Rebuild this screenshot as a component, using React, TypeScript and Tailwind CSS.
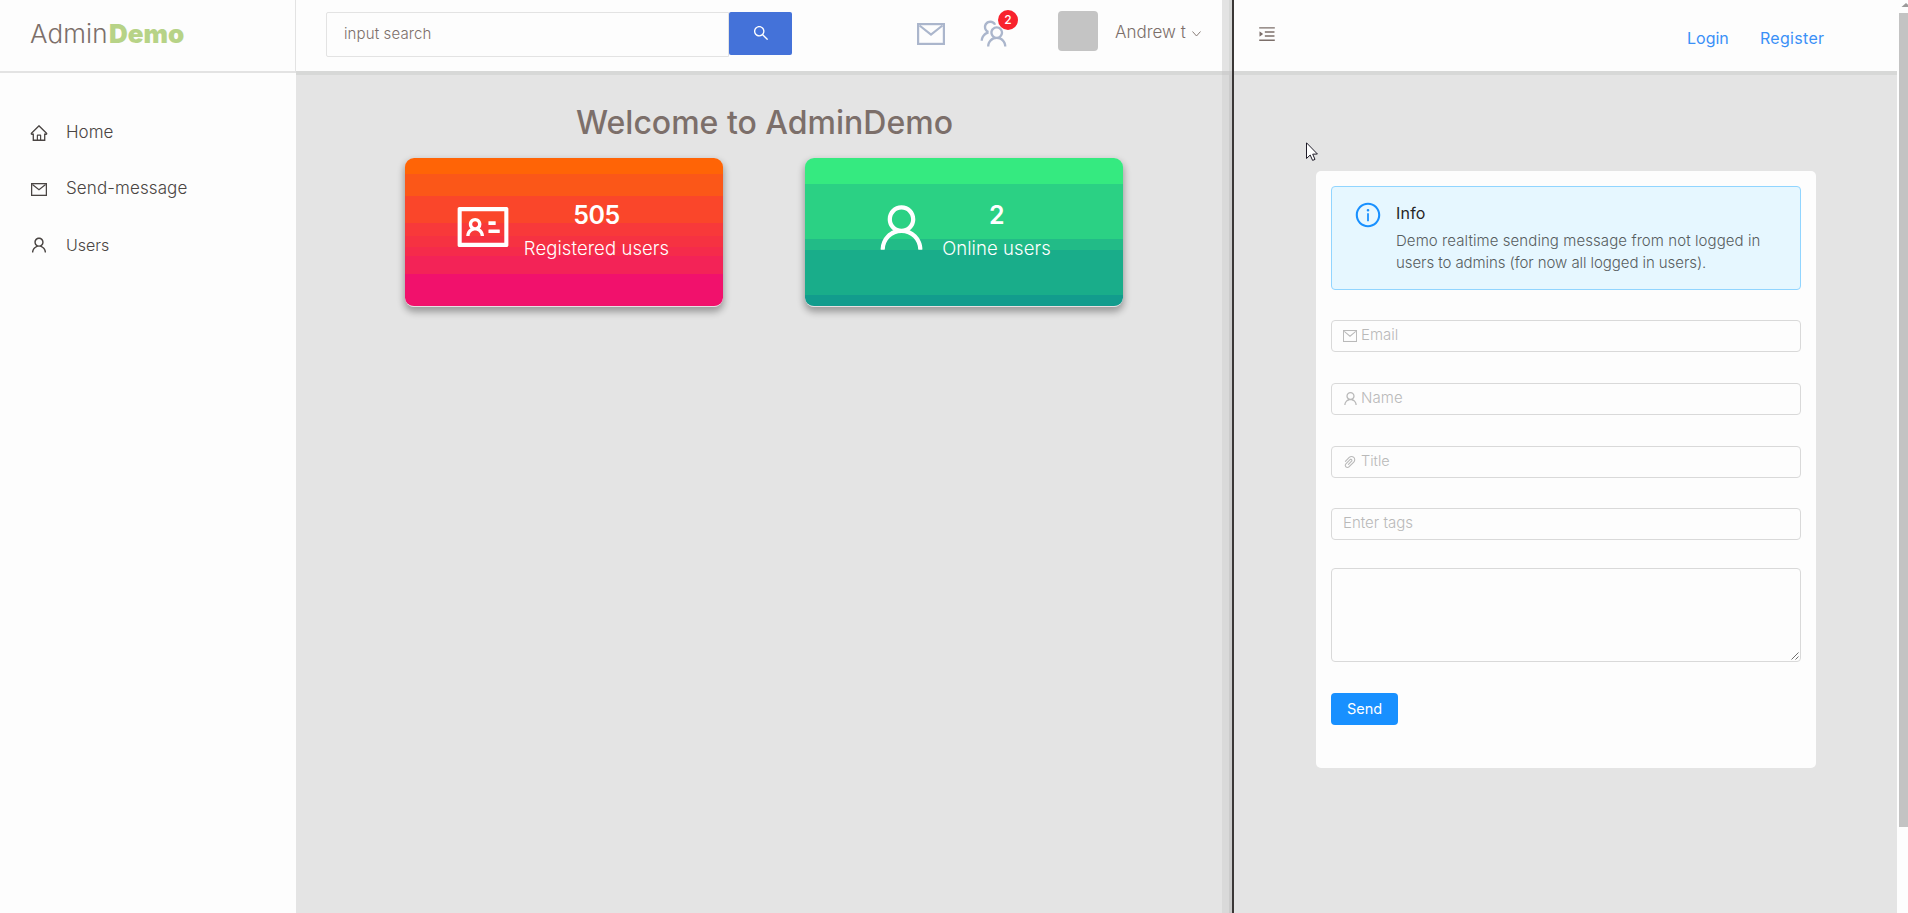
import React from "react";
import {
  AiOutlineHome,
  AiOutlineIdcard,
  AiOutlineInfoCircle,
  AiOutlineMenuUnfold,
  AiOutlinePaperClip,
  AiOutlineSearch,
  AiOutlineTeam,
  AiOutlineUser,
} from "react-icons/ai";

function Envelope({ className = "", stroke = 2 }: { className?: string; stroke?: number }) {
  return (
    <svg viewBox="0 0 28 22" preserveAspectRatio="none" fill="none" stroke="currentColor" strokeWidth={stroke} className={className}>
      <rect x={stroke / 2} y={stroke / 2} width={28 - stroke} height={22 - stroke} />
      <path d="M2.5 2.5 L14 11.5 L25.5 2.5" />
    </svg>
  );
}

function Sidebar() {
  return (
    <aside className="flex h-full w-[296px] shrink-0 flex-col bg-[#fdfdfd]">
      <div className="flex h-[73px] items-center border-r border-b-2 border-[#e3e3e3] pb-[3px] pl-[30px] text-[26px] leading-none">
        <span className="w-[79px] font-light tracking-[0.1px] text-[#7c6f6a]">Admin</span>
        <span className="font-black text-[#b7d387]">Demo</span>
      </div>
      <nav className="flex flex-col pt-[32px] text-[17px] text-[#4a4543]">
        <a className="flex h-14 items-center gap-[19px] pl-[31px]">
          <AiOutlineHome className="h-4 w-4 scale-[1.18]" />
          <span className="font-light">Home</span>
        </a>
        <a className="flex h-14 items-center gap-[19px] pl-[31px]">
          <Envelope className="h-[13px] w-4" stroke={2.2} />
          <span className="font-light tracking-[0.1px]">Send-message</span>
        </a>
        <a className="flex h-14 items-center gap-[19px] pl-[31px]">
          <AiOutlineUser className="h-4 w-4 scale-[1.2]" />
          <span className="text-base font-light">Users</span>
        </a>
      </nav>
    </aside>
  );
}

function StatCard({
  icon,
  value,
  label,
  gradient,
}: {
  icon: React.ReactNode;
  value: string;
  label: string;
  gradient: string;
}) {
  return (
    <div
      className={`flex h-[149px] w-[318px] items-center justify-center gap-[11px] rounded-[9px] border-b border-[#e8dfe2] pr-[6px] text-white shadow-[0_4px_7px_1px_rgba(0,0,0,0.32)] ${gradient}`}
    >
      <span className="mb-[10px] flex h-[60px] w-[60px] items-center justify-center">{icon}</span>
      <div className="flex flex-col items-center whitespace-nowrap">
        <span className="text-[25px] leading-[32px] font-semibold tracking-[-0.5px]">{value}</span>
        <span className="text-[18.5px] leading-[34px] font-light tracking-[0.08px]">{label}</span>
      </div>
    </div>
  );
}

function AdminPane() {
  return (
    <section className="flex h-full w-[926px] shrink-0 flex-col">
      <header className="flex h-[75px] shrink-0 items-start border-b-4 border-[#d7d8d7] bg-[#fdfdfd] text-[#7c6f6a]">
        <div className="mt-[12px] ml-[30px] flex items-start">
          <div className="flex h-[45px] w-[403px] items-center rounded-l-[2px] border border-[#e3e3e3] pb-px pl-[17px] text-[15px] font-light tracking-[0.12px]">
            input search
          </div>
          <button className="flex h-[43px] w-[63px] items-center justify-center rounded-[2px] bg-[#4472d9] pb-px text-white">
            <AiOutlineSearch className="h-[18px] w-[18px]" />
          </button>
        </div>
        <Envelope className="mt-[23px] ml-[125px] h-[22px] w-[28px] text-[#abb6cc]" stroke={2.2} />
        <div className="relative mt-[17px] ml-[32px] h-[34px] w-[34px] text-[#abb6cc]">
          <AiOutlineTeam className="h-[33px] w-[33px]" />
          <span className="absolute -top-[7px] left-[21px] flex h-5 w-5 items-center justify-center rounded-full bg-[#f8222d] text-xs font-medium text-white">
            2
          </span>
        </div>
        <div className="mt-[11px] ml-[47px] h-10 w-10 rounded-[4px] bg-[#c4c4c4]" />
        <span className="mt-[20px] ml-[17px] w-[77px] text-[17px] leading-6 font-light whitespace-nowrap">Andrew t</span>
        <svg viewBox="0 0 9 6" className="mt-[31px] h-[6px] w-[9px]" fill="none" stroke="currentColor" strokeWidth="0.9">
          <path d="M0.5 0.5 L4.5 5 L8.5 0.5" />
        </svg>
      </header>
      <main className="flex flex-col">
        <h1 className="mt-[26px] pl-[11px] text-center text-[32px] leading-[44px] font-medium text-[#7c6f6a]">
          Welcome to AdminDemo
        </h1>
        <div className="mt-[13px] ml-[109px] flex gap-[82px]">
          <StatCard
            icon={<AiOutlineIdcard className="h-[58px] w-[58px] shrink-0" />}
            value="505"
            label="Registered users"
            gradient="bg-[linear-gradient(to_bottom,#ff6406_16px,#fb5718_16px,#fb5718_38px,#fa462a_38px,#fa462a_65px,#f8393a_65px,#f8393a_78px,#f63242_78px,#f63242_89px,#f52b4b_89px,#f52b4b_98px,#f32357_98px,#f32357_116px,#f1116c_116px)]"
          />
          <StatCard
            icon={<AiOutlineUser className="h-[57px] w-[57px] shrink-0" />}
            value="2"
            label="Online users"
            gradient="bg-[linear-gradient(to_bottom,#35ea80_26px,#2bd184_26px,#2bd184_81px,#22bb87_81px,#22bb87_92px,#19ad8a_92px,#19ad8a_137px,#129c8d_137px)]"
          />
        </div>
      </main>
    </section>
  );
}

function Divider() {
  return (
    <div className="flex h-full w-[12px] shrink-0 flex-row">
      <div className="flex w-[7px] flex-col">
        <div className="h-[71px] bg-[#e3e3e3]" />
        <div className="h-[4px] bg-[#cfcfcf]" />
        <div className="grow bg-[#d9d9d9]" />
      </div>
      <div className="flex w-[3px] flex-col">
        <div className="h-[71px] bg-[#d7d8d7]" />
        <div className="grow bg-[#cbcbcb]" />
      </div>
      <div className="w-[2px] bg-[#3a3736]" />
    </div>
  );
}

function Field({ icon, label, text }: { icon?: React.ReactNode; label: string; text: string }) {
  return (
    <div className="flex h-8 items-center rounded-[4px] border border-[#d9d9d9] pb-[2px] pl-[11px] text-[#b9b9b9]">
      {icon && <span className="mr-[4px] flex h-[14px] w-[14px] items-center justify-center pt-px">{icon}</span>}
      <span className={`font-light ${text}`}>{label}</span>
    </div>
  );
}

function GuestPane() {
  return (
    <section className="flex h-full w-[663px] shrink-0 flex-col">
      <header className="flex h-[75px] shrink-0 items-start border-b-4 border-[#d7d8d7] bg-[#fdfdfd]">
        <AiOutlineMenuUnfold className="mt-[24px] ml-[23px] h-5 w-5 text-[#7c6f6a]" />
        <span className="mt-[26px] ml-[410px] w-[73px] text-base leading-6 text-[#3a90f7]">Login</span>
        <span className="mt-[26px] text-base leading-6 tracking-[0.3px] text-[#3a90f7]">Register</span>
      </header>
      <form className="mt-[96px] ml-[82px] flex h-[597px] w-[500px] flex-col rounded-[5px] bg-[#fdfdfd] pt-[15px] pr-[15px] pl-[15px]">
        <div className="flex h-[104px] rounded-[4px] border border-[#91d5ff] bg-[#e6f7ff] pt-[14px] pl-[22px]">
          <AiOutlineInfoCircle className="h-7 w-7 text-[#1890ff]" />
          <div className="ml-[14px] flex flex-col whitespace-nowrap">
            <span className="text-base leading-[25px] tracking-[0.2px] text-[#262626]">Info</span>
            <p className="mt-[4px] text-[15px] leading-[22px] font-light text-[#575d60]">
              <span className="tracking-[0.08px]">Demo realtime sending message from not logged in</span>
              <br />
              <span className="tracking-[-0.07px]">users to admins (for now all logged in users).</span>
            </p>
          </div>
        </div>
        <div className="mt-[30px] flex flex-col gap-[31px]">
          <Field icon={<Envelope className="h-[12px] w-[14px]" stroke={1.9} />} label="Email" text="text-[15px]" />
          <Field icon={<AiOutlineUser className="h-[17px] w-[17px] shrink-0" />} label="Name" text="text-[15px] tracking-[0.1px]" />
          <Field icon={<AiOutlinePaperClip className="h-4 w-4 shrink-0" />} label="Title" text="text-[14.5px]" />
        </div>
        <div className="mt-[30px] flex flex-col">
          <Field label="Enter tags" text="text-[15px]" />
        </div>
        <div className="mt-[28px] flex h-[94px] items-end justify-end rounded-[4px] border border-[#d9d9d9] pr-px pb-px">
          <svg viewBox="0 0 8 8" className="h-2 w-2" stroke="#5f5f5f" strokeWidth="0.9">
            <path d="M0.5 7.5 L7.5 0.5 M4.5 7.5 L7.5 4.5" />
          </svg>
        </div>
        <button className="mt-[31px] flex h-8 w-[67px] items-center justify-center rounded-[4px] bg-[#1890ff] text-[14.5px] text-white">
          Send
        </button>
      </form>
    </section>
  );
}

function Scrollbar() {
  return (
    <div className="flex h-full w-[11px] shrink-0 flex-col bg-[#fdfdfd] pl-[2px]">
      <svg viewBox="0 0 9 13" className="h-[13px] w-[9px] shrink-0" fill="#9a9a9a">
        <path d="M2.5 7 L7 3 L9 4.8 L9 7 Z" />
      </svg>
      <div className="h-[814px] bg-[#c3c3c3]" />
    </div>
  );
}

export default function App() {
  return (
    <div className="relative flex h-[913px] w-[1908px] overflow-hidden bg-[#e4e4e4] font-['Inter','Liberation_Sans',sans-serif]">
      <Sidebar />
      <AdminPane />
      <Divider />
      <GuestPane />
      <Scrollbar />
      <svg viewBox="0 0 12 19" className="absolute top-[142px] left-[1306px] h-[19px] w-[12px]" fill="#ffffff" stroke="#1f1c28" strokeWidth="1">
        <path d="M0.5 0.8 L0.5 16.5 L4.2 13 L6.6 18.4 L9 17.4 L6.7 12.2 L11.4 12 Z" />
      </svg>
    </div>
  );
}
